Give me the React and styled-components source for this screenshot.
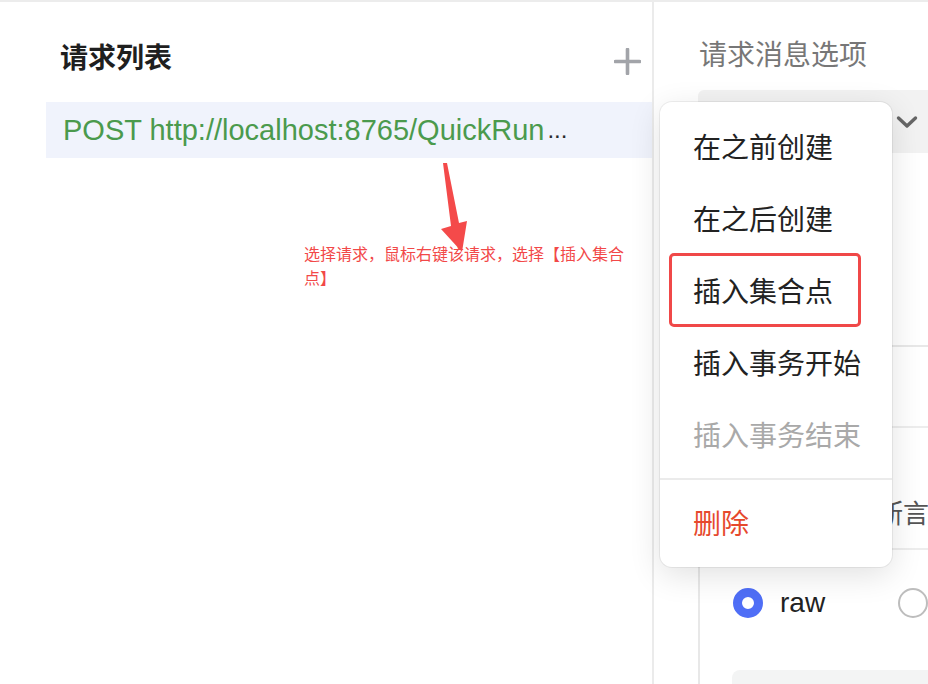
import React from 'react';
import styled, { createGlobalStyle, css } from 'styled-components';

const GlobalStyle = createGlobalStyle`
  html, body {
    margin: 0;
    padding: 0;
    background: #fff;
  }
  body {
    font-family: "Liberation Sans", "Noto Sans CJK SC", sans-serif;
  }
  * {
    box-sizing: border-box;
  }
`;

const menuItems = [
  { label: '在之前创建' },
  { label: '在之后创建' },
  { label: '插入集合点', marked: true },
  { label: '插入事务开始' },
  { label: '插入事务结束', disabled: true },
];

const App = () => {
  return (
    <>
      <GlobalStyle />
      <Page>
        <TopStrip />
        <Main>
          <LeftPanel>
            <ListHeader>
              <ListTitle>请求列表</ListTitle>
              <AddButton aria-label="添加请求">
                <svg width="27" height="27" viewBox="0 0 27 27">
                  <path d="M13.5 1.5v24M1.5 13.5h24" stroke="#a2a4a9" strokeWidth="3.6" strokeLinecap="round" />
                </svg>
              </AddButton>
            </ListHeader>

            <RequestRow>
              <RequestUrl>POST http://localhost:8765/QuickRun</RequestUrl>
              <Dots>...</Dots>
            </RequestRow>

            <Hint>
              <HintArrow width="32" height="96" viewBox="0 0 32 96">
                <polygon points="7,3 11,3 23,63 31,61 26,92 5,69 15,66" fill="#f44a4a" />
              </HintArrow>
              <HintText>选择请求，鼠标右键该请求，选择【插入集合点】</HintText>
            </Hint>
          </LeftPanel>

          <RightPanel>
            <SectionTitle>请求消息选项</SectionTitle>
            <SelectBox>
              <svg width="22" height="14" viewBox="0 0 22 14">
                <path d="M2.5 3l8.5 8 8.5-8" fill="none" stroke="#666" strokeWidth="3.4" strokeLinecap="round" strokeLinejoin="round" />
              </svg>
            </SelectBox>

            <OptionsCard>
              <CardRow $height={81} />
              <TabRow>
                <Tab>断言</Tab>
              </TabRow>
              <RadioRow>
                <RadioOption>
                  <RadioDot $checked />
                  <RadioLabel>raw</RadioLabel>
                </RadioOption>
                <RadioOption>
                  <RadioDot />
                </RadioOption>
              </RadioRow>
              <BodyEditor />
            </OptionsCard>
          </RightPanel>
        </Main>

        <ContextMenu>
          {menuItems.map(item => (
            <MenuItem key={item.label} $disabled={item.disabled} $marked={item.marked}>
              {item.label}
            </MenuItem>
          ))}
          <MenuDivider />
          <MenuItem $danger>删除</MenuItem>
        </ContextMenu>
      </Page>
    </>
  );
};

const Page = styled.div`
  position: relative;
  width: 928px;
  height: 684px;
  overflow: hidden;
  background: #fff;
`;

const TopStrip = styled.div`
  height: 2px;
  background: #ececec;
`;

const Main = styled.div`
  display: flex;
  height: 682px;
`;

const LeftPanel = styled.div`
  position: relative;
  width: 654px;
  flex-shrink: 0;
  padding-left: 46px;
  border-right: 2px solid #ebebeb;
`;

const ListHeader = styled.div`
  display: flex;
  align-items: center;
  justify-content: space-between;
  height: 100px;
  padding: 13px 11px 0 14px;
`;

const ListTitle = styled.h2`
  margin: 0;
  font-size: 28px;
  line-height: 34px;
  font-weight: 700;
  color: #1f1f1f;
`;

const AddButton = styled.button`
  display: flex;
  padding: 0;
  margin-top: 5px;
  border: none;
  background: none;
  cursor: pointer;
`;

const RequestRow = styled.div`
  display: flex;
  align-items: center;
  height: 56px;
  padding-left: 17px;
  background: #f0f3fc;
  font-size: 29px;
  white-space: nowrap;
  overflow: hidden;
`;

const RequestUrl = styled.span`
  color: #4b9a4d;
`;

const Dots = styled.span`
  color: #2a2a2a;
  font-size: 24px;
  margin-left: 3px;
`;

const Hint = styled.div`
  position: relative;
  margin: 85px 0 0 258px;
`;

const HintArrow = styled.svg`
  position: absolute;
  left: 132px;
  top: -83px;
`;

const HintText = styled.p`
  position: relative;
  margin: 0;
  width: 330px;
  font-size: 16px;
  line-height: 24px;
  color: #f24848;
`;

const RightPanel = styled.div`
  flex: 1;
  min-width: 0;
  padding-left: 44px;
  overflow: hidden;
`;

const SectionTitle = styled.h3`
  margin: 38px 0 0 1px;
  font-size: 28px;
  line-height: 32px;
  font-weight: 400;
  color: #777;
`;

const SelectBox = styled.div`
  display: flex;
  align-items: center;
  justify-content: flex-end;
  margin-top: 18px;
  height: 63px;
  padding-right: 10px;
  background: #f2f2f2;
  border-radius: 6px 0 0 6px;
`;

const OptionsCard = styled.div`
  margin-top: 192px;
  border-top: 2px solid #e8e8e8;
  border-left: 2px solid #e8e8e8;
`;

const CardRow = styled.div`
  height: ${p => p.$height}px;
  border-bottom: 2px solid #ededed;
`;

const TabRow = styled.div`
  display: flex;
  align-items: flex-end;
  height: 122px;
  padding: 0 0 19px 177px;
  border-bottom: 2px solid #ededed;
`;

const Tab = styled.span`
  font-size: 26px;
  line-height: 30px;
  color: #555;
  white-space: nowrap;
`;

const RadioRow = styled.div`
  display: flex;
  align-items: center;
  gap: 73px;
  height: 106px;
  padding-left: 33px;
`;

const RadioOption = styled.label`
  display: flex;
  align-items: center;
  gap: 17px;
  white-space: nowrap;
`;

const RadioDot = styled.span`
  width: 30px;
  height: 30px;
  border-radius: 50%;
  background: #fff;
  flex-shrink: 0;
  ${p => p.$checked
    ? css`border: 9px solid #4f6ef6;`
    : css`border: 2px solid #bdbdbd;`}
`;

const RadioLabel = styled.span`
  font-size: 28px;
  line-height: 32px;
  color: #222;
`;

const BodyEditor = styled.div`
  margin: 14px 0 0 32px;
  height: 40px;
  background: #f3f4f4;
  border-radius: 8px 0 0 0;
`;

const ContextMenu = styled.div`
  position: absolute;
  left: 660px;
  top: 102px;
  width: 232px;
  padding: 9px 0 8px;
  background: #fff;
  border-radius: 12px;
  box-shadow: 0 0 0 1px rgba(0, 0, 0, 0.06), 0 8px 32px rgba(0, 0, 0, 0.12);
`;

const MenuItem = styled.div`
  position: relative;
  display: flex;
  align-items: center;
  height: 72px;
  padding: 0 0 3px 33px;
  font-size: 28px;
  color: ${p => (p.$danger ? '#e6492d' : p.$disabled ? '#a9a9a9' : '#222')};
  cursor: ${p => (p.$disabled ? 'default' : 'pointer')};

  ${p => p.$marked && css`
    &::after {
      content: '';
      position: absolute;
      left: 9px;
      right: 31px;
      top: -2px;
      bottom: 0;
      border: 3px solid #f04848;
      border-radius: 5px;
    }
  `}
`;

const MenuDivider = styled.div`
  height: 2px;
  margin: 7px 0;
  background: #ebebeb;
`;

export default App;
